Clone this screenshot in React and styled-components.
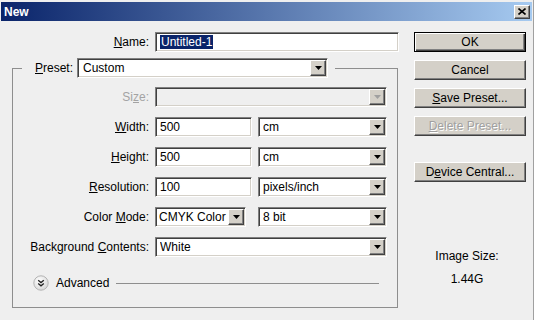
import React from "react";
import styled, { createGlobalStyle } from "styled-components";

const Global = createGlobalStyle`
  html, body { margin: 0; padding: 0; background: #efefef; }
  body { font-family: "Liberation Sans", Arial, sans-serif; font-size: 12px; color: #000; }
`;

const Window = styled.div`
  width: 534px;
  height: 320px;
  box-sizing: border-box;
  background: #efefef;
  padding-top: 2px;
  display: flex;
  flex-direction: column;
  overflow: hidden;
  border-right: 1px solid #a0a0a0;
`;

const TitleBar = styled.div`
  height: 19px;
  margin: 0 1px;
  padding: 0 2px 0 3px;
  display: flex;
  align-items: center;
  justify-content: space-between;
  background: linear-gradient(to right, #0a246a, #a6caf0);
`;

const Title = styled.span`
  color: #fff;
  font-weight: bold;
  font-size: 12px;
`;

const CloseButton = styled.div`
  width: 16px;
  height: 14px;
  box-sizing: border-box;
  background: #d4d0c8;
  border: 1px solid;
  border-color: #fff #404040 #404040 #fff;
  box-shadow: inset -1px -1px #808080;
  display: flex;
  align-items: center;
  justify-content: center;
`;

const Content = styled.div`
  display: flex;
  padding-top: 11px;
`;

const LeftPane = styled.div`
  width: 400px;
  display: flex;
  flex-direction: column;
`;

const NameRow = styled.div`
  display: grid;
  grid-template-columns: 149px 244px;
  column-gap: 6px;
  align-items: center;
`;

const Label = styled.span`
  text-align: right;
  white-space: nowrap;
  color: ${(p) => (p.$disabled ? "#a3a3a3" : "#000")};
`;

const Key = styled.span`
  text-decoration: underline;
`;

const Fieldset = styled.fieldset`
  margin: 6px 0 0 12px;
  padding: 0 0 16px 0;
  width: 386px;
  box-sizing: border-box;
  min-width: 0;
  border: 1px solid #8e8e8e;
`;

const Legend = styled.legend`
  margin-left: 9px;
  padding: 0 7px 0 13px;
  height: 20px;
  display: flex;
  align-items: center;
  gap: 4px;
`;

const Rows = styled.div`
  display: grid;
  grid-template-columns: 136px 232px;
  column-gap: 6px;
  row-gap: 10px;
  padding-top: 9px;
  align-items: center;
`;

const Fields = styled.div`
  display: grid;
  grid-template-columns: ${(p) => (p.$split ? "97px 129px" : "232px")};
  column-gap: 6px;
`;

const sunken = `
  border: 1px solid;
  border-color: #808080 #ffffff #ffffff #808080;
  box-shadow: inset 1px 1px #404040, inset -1px -1px #d4d0c8;
`;

const raised = `
  border: 1px solid;
  border-color: #ffffff #404040 #404040 #ffffff;
  box-shadow: inset -1px -1px #808080;
`;

const TextInput = styled.div`
  width: ${(p) => (p.$w ? `${p.$w}px` : "100%")};
  height: 20px;
  box-sizing: border-box;
  background: #fff;
  ${sunken}
  padding-left: 4px;
  display: flex;
  align-items: center;
  white-space: nowrap;
`;

const Selected = styled.span`
  background: #0a246a;
  color: #fff;
  padding: 0 1px;
`;

const Select = styled.div`
  width: ${(p) => (p.$w ? `${p.$w}px` : "100%")};
  height: 20px;
  box-sizing: border-box;
  background: ${(p) => (p.$disabled ? "#efefef" : "#fff")};
  ${sunken}
  padding: 1px 1px 1px ${(p) => p.$pad || 4}px;
  display: flex;
  align-items: center;
  justify-content: space-between;
  white-space: nowrap;
  overflow: hidden;
`;

const SelectText = styled.span`
  overflow: hidden;
  flex: 1;
  min-width: 0;
`;

const DropButton = styled.div`
  width: 16px;
  height: 16px;
  flex: none;
  box-sizing: border-box;
  background: #d4d0c8;
  ${raised}
  display: flex;
  align-items: center;
  justify-content: center;
`;

const Arrow = ({ disabled }) => (
  <svg width="7" height="4" viewBox="0 0 7 4">
    <polygon points="0,0 7,0 3.5,4" fill={disabled ? "#a0a0a0" : "#000"} />
  </svg>
);

const AdvancedRow = styled.div`
  display: flex;
  align-items: center;
  gap: 7px;
  margin: 18px 18px 0 20px;
  height: 16px;
`;

const Rule = styled.div`
  flex: 1;
  height: 1px;
  background: #8e8e8e;
`;

const RightPane = styled.div`
  width: 112px;
  margin-left: 14px;
  display: flex;
  flex-direction: column;
  gap: 8px;
`;

const Button = styled.div`
  height: 20px;
  box-sizing: border-box;
  background: #d4d0c8;
  display: flex;
  align-items: center;
  justify-content: center;
  white-space: nowrap;
  margin-top: ${(p) => p.$mt || 0}px;
  color: ${(p) => (p.$disabled ? "#a0a0a0" : "#000")};
  text-shadow: ${(p) => (p.$disabled ? "1px 1px #fff" : "none")};
  ${(p) =>
    p.$default
      ? `border: 1px solid #000;
         box-shadow: inset 1px 1px #fff, inset -1px -1px #404040, inset -2px -2px #808080;`
      : raised}
`;

const Info = styled.div`
  margin-top: 55px;
  padding-right: 6px;
  text-align: center;
  line-height: 23px;
`;

const Row = ({ label, disabled, split, children }) => (
  <>
    <Label $disabled={disabled}>{label}</Label>
    <Fields $split={split}>{children}</Fields>
  </>
);

const Dropdown = ({ w, value, disabled, pad }) => (
  <Select $w={w} $disabled={disabled} $pad={pad}>
    <SelectText>{value}</SelectText>
    <DropButton>
      <Arrow disabled={disabled} />
    </DropButton>
  </Select>
);

export default function App() {
  return (
    <>
      <Global />
      <Window>
        <TitleBar>
          <Title>New</Title>
          <CloseButton>
            <svg width="8" height="7" viewBox="0 0 8 7">
              <path d="M0.5 0.5 L7.5 6.5 M7.5 0.5 L0.5 6.5" stroke="#000" strokeWidth="1.6" />
            </svg>
          </CloseButton>
        </TitleBar>
        <Content>
          <LeftPane>
            <NameRow>
              <Label>
                <Key>N</Key>ame:
              </Label>
              <TextInput>
                <Selected>Untitled-1</Selected>
              </TextInput>
            </NameRow>
            <Fieldset>
              <Legend>
                <Label>
                  <Key>P</Key>reset:
                </Label>
                <Dropdown w={251} value="Custom" pad={5} />
              </Legend>
              <Rows>
                <Row label={<>Si<Key>z</Key>e:</>} disabled>
                  <Dropdown value="" disabled />
                </Row>
                <Row label={<><Key>W</Key>idth:</>} split>
                  <TextInput>500</TextInput>
                  <Dropdown value="cm" />
                </Row>
                <Row label={<><Key>H</Key>eight:</>} split>
                  <TextInput>500</TextInput>
                  <Dropdown value="cm" />
                </Row>
                <Row label={<><Key>R</Key>esolution:</>} split>
                  <TextInput>100</TextInput>
                  <Dropdown value="pixels/inch" />
                </Row>
                <Row label={<>Color <Key>M</Key>ode:</>} split>
                  <Dropdown w={91} value="CMYK Color" pad={3} />
                  <Dropdown value="8 bit" />
                </Row>
                <Row label={<>Background <Key>C</Key>ontents:</>}>
                  <Dropdown value="White" />
                </Row>
              </Rows>
              <AdvancedRow>
                <svg width="16" height="16" viewBox="0 0 16 16">
                  <defs>
                    <radialGradient id="advg" cx="40%" cy="35%" r="70%">
                      <stop offset="0%" stopColor="#ffffff" />
                      <stop offset="100%" stopColor="#d6d6d6" />
                    </radialGradient>
                  </defs>
                  <circle cx="8" cy="8" r="7.2" fill="url(#advg)" stroke="#b4b4b4" />
                  <polyline points="5.2,5.2 8,7.6 10.8,5.2" fill="none" stroke="#222" strokeWidth="1.3" />
                  <polyline points="5.2,8.4 8,10.8 10.8,8.4" fill="none" stroke="#222" strokeWidth="1.3" />
                </svg>
                <span>Advanced</span>
                <Rule />
              </AdvancedRow>
            </Fieldset>
          </LeftPane>
          <RightPane>
            <Button $default>OK</Button>
            <Button>Cancel</Button>
            <Button>
              <Key>S</Key>ave Preset...
            </Button>
            <Button $disabled>
              <Key>D</Key>elete Preset...
            </Button>
            <Button $mt={18}>
              D<Key>e</Key>vice Central...
            </Button>
            <Info>
              <div>Image Size:</div>
              <div>1.44G</div>
            </Info>
          </RightPane>
        </Content>
      </Window>
    </>
  );
}
